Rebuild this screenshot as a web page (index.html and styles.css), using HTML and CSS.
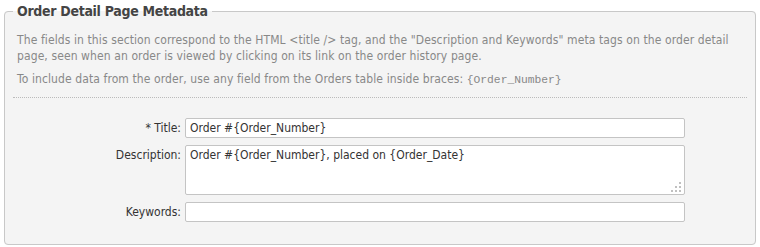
FILE: index.html
```html
<!DOCTYPE html>
<html lang="en">
<head>
    <meta charset="UTF-8">
    <title>Order Detail Page Metadata</title>
    <link rel="stylesheet" href="styles.css">
</head>
<body>
    <fieldset class="panel">
        <legend>Order Detail Page Metadata</legend>
        <p class="note">The fields in this section correspond to the HTML &lt;title /&gt; tag, and the "Description and Keywords" meta tags on the order detail page, seen when an order is viewed by clicking on its link on the order history page.</p>
        <p class="note">To include data from the order, use any field from the Orders table inside braces: <code>{Order_Number}</code></p>
        <div class="form">
            <label for="metaTitle">* Title:</label>
            <input type="text" id="metaTitle" value="Order #{Order_Number}">
            <label for="metaDesc" class="top">Description:</label>
            <div class="area">
                <textarea id="metaDesc">Order #{Order_Number}, placed on {Order_Date}</textarea>
                <svg class="grip" width="11" height="10" viewBox="0 0 11 10">
                    <rect x="8" y="0" width="2" height="2"/>
                    <rect x="4" y="4" width="2" height="2"/>
                    <rect x="8" y="4" width="2" height="2"/>
                    <rect x="0" y="8" width="2" height="2"/>
                    <rect x="4" y="8" width="2" height="2"/>
                    <rect x="8" y="8" width="2" height="2"/>
                </svg>
            </div>
            <label for="metaKeys">Keywords:</label>
            <input type="text" id="metaKeys" value="">
        </div>
    </fieldset>
</body>
</html>
```

FILE: styles.css
```css
body {
    margin: 0;
    padding: 0 4px 3px 4px;
    background-color: #fff;
    font-family: 'DejaVu Sans Condensed', 'DejaVu Sans', sans-serif;
    font-stretch: condensed;
    font-size: 12px;
    color: #333;
}

.panel {
    margin: 0;
    padding: 0 12px 22px 12px;
    border: 1px solid #c8c8c8;
    border-radius: 4px;
    background-color: #f4f4f4;
}

.panel legend {
    margin-left: -4px;
    padding: 0 4px;
    font-size: 14px;
    line-height: 23px;
    letter-spacing: -0.3px;
    font-weight: bold;
    color: #444;
}

.note {
    margin: 0;
    color: #888;
    line-height: 16px;
    letter-spacing: 0.1px;
}

.note:first-of-type {
    margin-top: 9px;
}

.note + .note {
    margin-top: 7px;
    padding-bottom: 9px;
}

.note code {
    font-family: 'Liberation Mono', monospace;
    font-size: 11.3px;
    letter-spacing: 0;
    color: #888;
}

.form {
    margin: 0 -4px;
    padding-top: 20px;
    border-top: 1px dotted #bbb;
    display: grid;
    grid-template-columns: 168px 500px;
    column-gap: 4px;
    row-gap: 7px;
    align-items: center;
}

.form label {
    text-align: right;
    color: #333;
}

.form label.top {
    align-self: start;
    padding-top: 3px;
}

input, textarea {
    box-sizing: border-box;
    margin: 0;
    width: 100%;
    padding: 2px 4px;
    border: 1px solid #c4c4c4;
    border-radius: 2px;
    background-color: #fff;
    font-family: 'DejaVu Sans Condensed', 'DejaVu Sans', sans-serif;
    font-stretch: condensed;
    font-size: 12px;
    color: #333;
}

input {
    height: 20px;
}

.area {
    position: relative;
}

textarea {
    height: 50px;
    resize: none;
    display: block;
}

.grip {
    position: absolute;
    right: 3px;
    bottom: 3px;
    fill: #c0c0c0;
}
```
